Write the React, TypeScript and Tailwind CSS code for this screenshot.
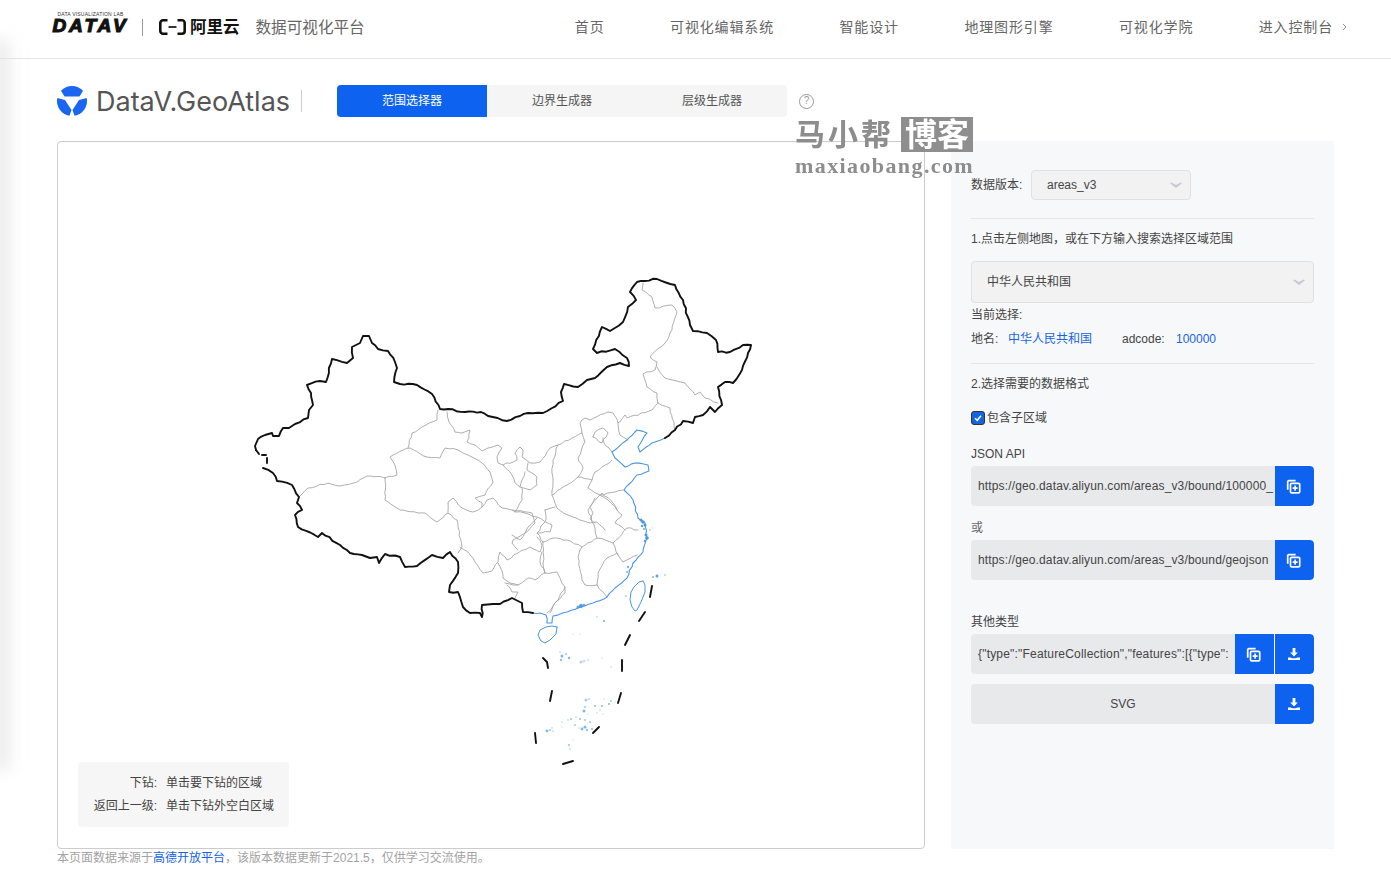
import React from "react";

const FONT = "font-['Liberation_Sans','Noto_Sans_CJK_SC',sans-serif]";

const BLACK = [
  "256,450 255,446 258,439 265,435 272,433 273,436 279,436 283,428 289,428 295,424 308,418 309,410 313,405 311,393 307,385 320,381 326,382 332,359 347,363 353,358 352,347 360,343 363,336 369,336 372,343 378,349 388,351 395,362 397,368 394,382 400,384 417,385 432,394 440,409 448,409 465,412 481,412 488,416 507,421 520,416 528,413 543,413 563,401 561,392 564,384 578,387 587,380 595,378 607,367 620,363 629,366 627,358 615,349 597,353 593,349 602,327 610,331 623,322 628,307 636,300 630,292 637,282 657,279 675,285 683,300 690,325 693,331 707,333 716,340 718,352 730,352 743,345 751,345 748,353 742,370 733,383 725,382 718,387 722,405 715,412 710,407 703,415 695,417 693,423 683,421 675,430 665,438",
  "263,468 273,473 277,481 292,485 299,497 297,503 302,510 295,515 298,527 318,537 322,533 340,545 350,553 362,555 370,558 377,557 379,563 385,554 400,557 405,567 417,566 432,555 443,558 450,552 458,562 458,573 450,585 449,592 458,592 463,607 470,613 480,613 482,617 482,605 493,604 500,604 512,598 522,603 523,612 533,613",
];
const DASHES = [
  "652,586 650,597", "645,612 639,621", "630,635 625,645", "622,660 622,671", "621,693 618,703", "599,727 593,733", "573,761 563,764", "535,733 536,743", "552,691 550,701", "543,658 547,662 548,668",
  "256,450 259,454", "262,455 266,455", "267,458 267,463",
];
const GRAY = [
  "299,497 308,488 328,483 340,486 357,482 367,476 385,478",
  "385,478 385,500 400,510 425,513 437,522 448,513",
  "448,513 457,520 462,547 458,553",
  "385,478 397,475 395,465 390,457 403,450 410,448 427,457 440,458 445,448 458,450 472,457 482,463 490,472 493,482 485,495 475,498 482,503 482,507 473,512 462,508 453,498 448,502 448,512",
  "438,410 437,420 422,427 412,433 408,448",
  "447,412 449,422 455,432 462,433 470,430 467,442 475,445 482,451 488,448 498,445 502,448 497,457 498,463 503,465 517,460 515,453 520,447 523,450 522,457 530,463 540,462 550,448 558,445 582,433 580,423 585,418 590,420 608,412 613,413 618,423 625,415 627,418 652,410 658,403",
  "503,465 512,475 515,483 520,487 530,490 537,485 537,477 527,470 528,463",
  "520,487 522,480 525,472",
  "522,488 522,500 515,512 512,510 502,508 493,498 487,500 482,507",
  "515,512 525,513 537,517 552,525 550,532 537,533 543,542",
  "558,445 553,460 552,473 553,483 552,495 557,508 568,515 580,520 590,523 597,522 605,530",
  "552,495 567,485 578,477 592,480 595,472 612,460",
  "582,433 585,442 578,458 583,468 578,477",
  "545,510 555,507",
  "545,510 546,520 537,533",
  "593,437 595,432 603,428 608,433 602,443 593,437",
  "603,438 605,445 612,452",
  "618,423 620,435 628,440",
  "592,480 588,488 600,495 615,492 623,490",
  "600,495 608,500 617,510 622,515 615,523 625,530",
  "595,498 590,507 593,513 590,519 595,523",
  "658,403 657,393 647,387 643,374 655,370 657,362 650,357 665,343 672,330 677,312 672,305 655,308 652,297 642,290 643,283",
  "657,367 665,378 685,383 695,395 700,392 705,398 718,403",
  "658,403 670,408 675,430",
  "460,547 468,552 475,562 483,573 492,571 498,562 500,552 507,560 518,553 530,547 540,552 542,545 537,537",
  "537,518 528,527 525,533 513,540 512,543 518,550",
  "498,563 503,575 503,578 510,583 518,585 528,578 535,580 545,573 540,562 542,552",
  "507,585 512,592 518,592 515,598",
  "545,573 557,572 560,578 565,587 558,600 547,613",
  "543,542 553,538 567,540 582,547 578,557 582,580 585,585 597,585 598,573 607,558 617,553 623,562 637,555",
  "543,542 543,563 545,573",
  "582,547 598,538 613,543 627,528 638,530",
  "613,543 618,555",
  "597,538 595,528 588,510 598,497 602,493 613,503 617,510",
  "597,585 603,592 607,597",
  "565,587 565,593 555,603 550,613",
  "505,583 518,585",
  "512,535 520,540 525,533 535,523 532,513 513,510",
];
const COAST = [
  "665,438 652,443 640,452 638,447 647,433 637,430 627,440 612,452 615,458 625,467 635,463 648,465 649,471 637,475 624,490 633,500 638,518 645,523 647,538 643,552 633,563 627,578 615,588 607,597 593,603 580,607 567,612 553,616 552,623 547,623 546,615 540,613 533,613",
];
const ISLANDS = [
  "557,627 556,634 550,640 545,643 541,641 538,635 540,630 546,627 552,626 557,627",
  "643,581 645,585 645,592 641,602 637,610 635,611 632,607 630,600 631,592 634,587 639,582 643,581",
];
const DOTS: [number, number, number, number][] = [
  [641,520,1.5,1],[643,522,1.8,1],[645,525,1.5,1],[642,526,1.2,.9],[644,529,1,.8],[646,535,1.5,1],[647,538,1.8,1],[645,541,1.2,.9],[650,530,1,.4],[652,528,.8,.3],
  [581,606,2,1],[578,607,1.6,.8],[584,605,1.3,.8],[628,567,1.2,.7],[627,572,1,.7],[657,576,1.5,.9],[653,577,1,.7],[665,575,.8,.7],[604,621,1,.8],[597,617,.8,.5],[626,596,1,.5],
  [562,656,1.5,.7],[566,654,1,.6],[569,658,1.2,.7],[561,660,1.2,.6],[560,652,.8,.5],[581,662,1.6,.4],[584,661,1.5,.3],[588,660,1.3,.2],[611,667,.8,.4],[602,658,1,.15],[573,634,1,.15],[580,634,1,.15],
  [586,700,1.5,.5],[585,707,1.2,.4],[584,711,1.5,.7],[595,706,1,.7],[602,706,1,.7],[609,704,1,.7],[611,701,1,.5],[597,713,.8,.4],[589,699,1,.4],[604,699,.8,.3],[600,710,1,.3],
  [580,719,1,.6],[585,720,1,.5],[590,722,1,.6],[592,729,1,.7],[585,727,1.6,.7],[582,729,1.4,.7],[575,725,1,.5],[568,720,.8,.5],[562,722,.8,.4],[571,719,1,.6],[587,730,1.2,.6],[579,728,.8,.4],[576,717,1,.3],
  [553,731,.8,.5],[547,731,1.4,.7],[550,730,1,.6],[552,728,.8,.5],[569,745,1,.6],[570,749,.8,.5],[562,727,.8,.3],[588,714,.8,.3],[615,702,.7,.3],[603,714,.8,.3],[573,740,.8,.2],
];

function rough(points: string, amp: number, step: number, seed: number) {
  let s = seed * 9301 + 49297;
  const rnd = () => {
    s = (s * 9301 + 49297) % 233280;
    return s / 233280 - 0.5;
  };
  const pts = points.split(" ").map((p) => p.split(",").map(Number));
  const out: string[] = [];
  pts.forEach(([x, y], i) => {
    out.push(`${x},${y}`);
    const next = pts[i + 1];
    if (!next) return;
    const dx = next[0] - x;
    const dy = next[1] - y;
    const len = Math.hypot(dx, dy);
    const n = Math.floor(len / step);
    for (let k = 1; k < n; k++) {
      const t = k / n;
      const o = rnd() * amp * 2;
      out.push(`${(x + dx * t - (dy / len) * o).toFixed(1)},${(y + dy * t + (dx / len) * o).toFixed(1)}`);
    }
  });
  return out.join(" ");
}

function CopyIcon() {
  return (
    <svg width="15" height="15" viewBox="0 0 14 14" fill="none" stroke="white">
      <path d="M9 1.6H2.6a1 1 0 0 0-1 1V10" strokeWidth="1.6" />
      <rect x="4.2" y="4" width="8.6" height="9" rx="1.2" strokeWidth="1.6" />
      <path d="M8.5 6v5M6.200 8.500h4.600" strokeWidth="1.500" />
    </svg>
  );
}
function DownloadIcon() {
  return (
    <svg width="14" height="14" viewBox="0 0 14 14" fill="white">
      <path d="M5.600 1h2.800v4.400h2.400L7 9.400 3.200 5.400h2.400z" />
      <path d="M1 10.400h2.600L5 11.200h4l1.400-.8H13V13H1z" />
    </svg>
  );
}
function Chevron() {
  return (
    <svg width="12" height="7" viewBox="0 0 12 7" fill="#c3c9d6">
      <path d="M0 1.200 1.400 0.400 6 3 10.600 0.400 12 1.200 6 6z" />
    </svg>
  );
}
function Btn({ children, last }: { children: React.ReactNode; last?: boolean }) {
  return (
    <div className={`w-[39px] h-full shrink-0 bg-[#0e62f0] flex items-center justify-center pr-[2px] ${last ? "rounded-r" : ""}`}>{children}</div>
  );
}
function GeoLogo() {
  return (
    <svg width="30" height="30" viewBox="0 0 30 30" fill="#1a66f0">
      <path d="M4 4.800A15 15 0 0 1 26 4.800L22.500 10.500H7.500Z" />
      <path d="M0.300 12 8 14 14.500 24 12.500 29.800A15 15 0 0 1 0.300 12Z" />
      <path d="M29.700 12 22 14 15.500 24 17.500 29.800A15 15 0 0 0 29.700 12Z" />
    </svg>
  );
}
function AliLogo() {
  return (
    <svg width="27" height="16" viewBox="0 0 27 16" fill="none" stroke="#111" strokeWidth="2.600">
      <path d="M8.500 1.300H4A2.700 2.700 0 0 0 1.300 4v8A2.700 2.700 0 0 0 4 14.700h4.500" />
      <path d="M18.500 1.300H23A2.700 2.700 0 0 1 25.700 4v8a2.700 2.700 0 0 1-2.700 2.700h-4.500" />
      <path d="M9.500 8h8" strokeWidth="1.700" />
    </svg>
  );
}

const NAV = ["首页", "可视化编辑系统", "智能设计", "地理图形引擎", "可视化学院", "进入控制台"];

export default function App() {
  return (
    <div className={`relative w-[1391px] h-[879px] overflow-hidden bg-white text-[12px] text-[#444] ${FONT}`}>
      <div className="absolute left-[-10px] top-[40px] w-[20px] h-[730px] bg-[#ececec] blur-[8px]" />

      <header className="relative h-[59px] border-b border-[#e4e4e4] flex items-center pl-[53px]">
        <div className="w-[75px] flex flex-col items-center mb-[12px]">
          <span className="text-[5px] leading-[5px] tracking-[0.2px] text-[#333] whitespace-nowrap">DATA VISUALIZATION LAB</span>
          <span className="text-[19px] leading-[17px] font-bold italic text-[#111] tracking-[3px] [-webkit-text-stroke:1.200px_#111] whitespace-nowrap">DATAV</span>
        </div>
        <div className="ml-[14px] mb-[4px] w-px h-[17px] bg-[#999]" />
        <div className="ml-[16px] mb-[4px] flex items-center"><AliLogo /></div>
        <span className="ml-[4px] mb-[3px] text-[16.500px] font-bold text-[#111] leading-none">阿里云</span>
        <span className="ml-[16px] mb-[2px] text-[15.600px] text-[#666] leading-none">数据可视化平台</span>
        <nav className="ml-auto mr-[58px] mb-[3px] flex items-center gap-[65.500px]">
          {NAV.map((n, i) => (
            <span key={n} className="relative text-[14px] tracking-[0.85px] text-[#666]">
              {n}
              {i === NAV.length - 1 && (
                <svg className="absolute left-[83px] top-[6px]" width="5" height="8" viewBox="0 0 5 8" fill="none" stroke="#888" strokeWidth="0.9">
                  <path d="M1 1l3 3-3 3" />
                </svg>
              )}
            </span>
          ))}
        </nav>
      </header>

      <div className="relative flex items-center h-[32px] mt-[26px] ml-[57px]">
        <GeoLogo />
        <span className="ml-[9px] text-[27px] leading-none font-['Inter',sans-serif] text-[#555]">DataV.GeoAtlas</span>
        <div className="ml-[11px] w-px h-[22px] bg-[#ccc]" />
        <div className="ml-[35px] flex h-[32px] rounded-sm overflow-hidden bg-[#f5f5f5]">
          <div className="w-[150px] bg-[#0e62f0] text-white flex items-center justify-center">范围选择器</div>
          <div className="w-[150px] flex items-center justify-center text-[#555]">边界生成器</div>
          <div className="w-[150px] flex items-center justify-center text-[#555]">层级生成器</div>
        </div>
        <div className="ml-[12px] w-[15px] h-[15px] rounded-full border border-[#999] flex items-center justify-center text-[10px] text-[#999] leading-none">?</div>
      </div>

      <div className="relative flex mt-[24px] ml-[57px] gap-[26px]">
        <div className="relative w-[868px] h-[708px] border border-[#ccc] rounded-sm">
          <svg className="w-full h-full" viewBox="58 142 866 706" fill="none" strokeLinejoin="round" strokeLinecap="round">
            {GRAY.map((p, i) => (
              <polyline key={p} points={rough(p, 0.8, 3.5, i + 1)} stroke="#a6a6a6" strokeWidth="0.9" />
            ))}
            {COAST.map((p, i) => (
              <polyline key={p} points={rough(p, 0.7, 3.5, i + 40)} stroke="#4a97e0" strokeWidth="1.1" />
            ))}
            {ISLANDS.map((p) => (
              <polyline key={p} points={p} stroke="#4a97e0" strokeWidth="1" />
            ))}
            {DOTS.map(([x, y, r, o], i) => (
              <circle key={i} cx={x} cy={y} r={r} fill="#4a97e0" opacity={o} />
            ))}
            {BLACK.map((p, i) => (
              <polyline key={p} points={rough(p, 0.8, 4, i + 70)} stroke="#111" strokeWidth="1.900" />
            ))}
            {DASHES.map((p) => (
              <polyline key={p} points={p} stroke="#111" strokeWidth="1.900" />
            ))}
          </svg>
          <div className="absolute left-[20px] top-[620px] w-[211px] h-[65px] bg-[#f6f6f6] rounded grid grid-cols-[79px_1fr] gap-x-[9px] content-center gap-y-[5px] leading-[18px] text-[#444]">
            <span className="text-right">下钻:</span>
            <span>单击要下钻的区域</span>
            <span className="text-right">返回上一级:</span>
            <span>单击下钻外空白区域</span>
          </div>
        </div>

        <aside className="w-[383px] h-[708px] bg-[#f7f8fa] px-[20px] pt-[29px] leading-[20px]">
          <div className="flex items-center h-[30px]">
            <span className="w-[60px]">数据版本:</span>
            <div className="w-[160px] h-[30px] bg-[#f2f2f3] border border-[#e0e1e3] rounded-sm flex items-center justify-between pl-[15px] pr-[8px]">
              <span>areas_v3</span>
              <Chevron />
            </div>
          </div>
          <div className="mt-[18px] h-px bg-[#e6e6e8]" />
          <div className="mt-[10px] h-[18px]">1.点击左侧地图，或在下方输入搜索选择区域范围</div>
          <div className="mt-[14px] h-[42px] bg-[#f2f2f3] border border-[#e0e1e3] rounded flex items-center justify-between pl-[15px] pr-[8px]">
            <span>中华人民共和国</span>
            <Chevron />
          </div>
          <div className="mt-[2px] h-[18px]">当前选择:</div>
          <div className="mt-[6px] h-[18px] flex">
            <span className="w-[37px]">地名:</span>
            <span className="w-[114px] text-[#1565e0]">中华人民共和国</span>
            <span className="w-[54px]">adcode:</span>
            <span className="text-[#1565e0]">100000</span>
          </div>
          <div className="mt-[16px] h-px bg-[#e6e6e8]" />
          <div className="mt-[10px] h-[18px]">2.选择需要的数据格式</div>
          <div className="mt-[17px] h-[18px] flex items-center gap-[2px]">
            <div className="w-[14px] h-[14px] rounded-[3px] bg-[#1565e0] border border-[#333] flex items-center justify-center">
              <svg width="10" height="10" viewBox="0 0 10 10" fill="none" stroke="white" strokeWidth="1.500"><path d="M2 5.200 4.200 7.300 8 2.800" /></svg>
            </div>
            <span>包含子区域</span>
          </div>
          <div className="mt-[17px] h-[18px]">JSON API</div>
          <div className="mt-[4px] h-[40px] flex rounded overflow-hidden bg-[#e8e9eb]">
            <div className="flex-1 min-w-0 flex items-center pl-[7px] whitespace-nowrap tracking-[0.14px]">https://geo.datav.aliyun.com/areas_v3/bound/100000_</div>
            <Btn last><CopyIcon /></Btn>
          </div>
          <div className="mt-[12px] h-[18px] text-[#666]">或</div>
          <div className="mt-[4px] h-[40px] flex rounded overflow-hidden bg-[#e8e9eb]">
            <div className="flex-1 min-w-0 flex items-center pl-[7px] whitespace-nowrap tracking-[0.14px]">https://geo.datav.aliyun.com/areas_v3/bound/geojson</div>
            <Btn last><CopyIcon /></Btn>
          </div>
          <div className="mt-[32px] h-[18px]">其他类型</div>
          <div className="mt-[4px] h-[40px] flex rounded overflow-hidden bg-[#e8e9eb]">
            <div className="flex-1 min-w-0 flex items-center pl-[7px] whitespace-nowrap tracking-[0.19px]">{'{"type":"FeatureCollection","features":[{"type":'}</div>
            <div className="flex h-full gap-px bg-white">
              <Btn><CopyIcon /></Btn>
              <Btn last><DownloadIcon /></Btn>
            </div>
          </div>
          <div className="mt-[10px] h-[40px] flex rounded overflow-hidden bg-[#e8e9eb]">
            <div className="flex-1 flex items-center justify-center">SVG</div>
            <Btn last><DownloadIcon /></Btn>
          </div>
        </aside>
      </div>

      <p className="relative mt-px ml-[57px] leading-[16px] text-[#a3a3a3]">
        本页面数据来源于<span className="text-[#1565e0]">高德开放平台</span>，该版本数据更新于2021.5，仅供学习交流使用。
      </p>

      <div className="absolute left-[795px] top-[117px] w-[180px] font-['Liberation_Serif','Noto_Sans_CJK_SC',serif] text-[#8d8d8d] select-none blur-[0.4px]">
        <div className="flex items-center h-[35px]">
          <span className="text-[30px] font-bold tracking-[3px] leading-none whitespace-nowrap">马小帮</span>
          <span className="ml-[7px] px-[4px] h-[35px] flex items-center bg-[#8e8e8e] text-white text-[32px] font-bold leading-none whitespace-nowrap">博客</span>
        </div>
        <div className="text-[22px] font-bold leading-[22px] tracking-[1.400px] mt-[3px] whitespace-nowrap">maxiaobang.com</div>
      </div>
    </div>
  );
}
